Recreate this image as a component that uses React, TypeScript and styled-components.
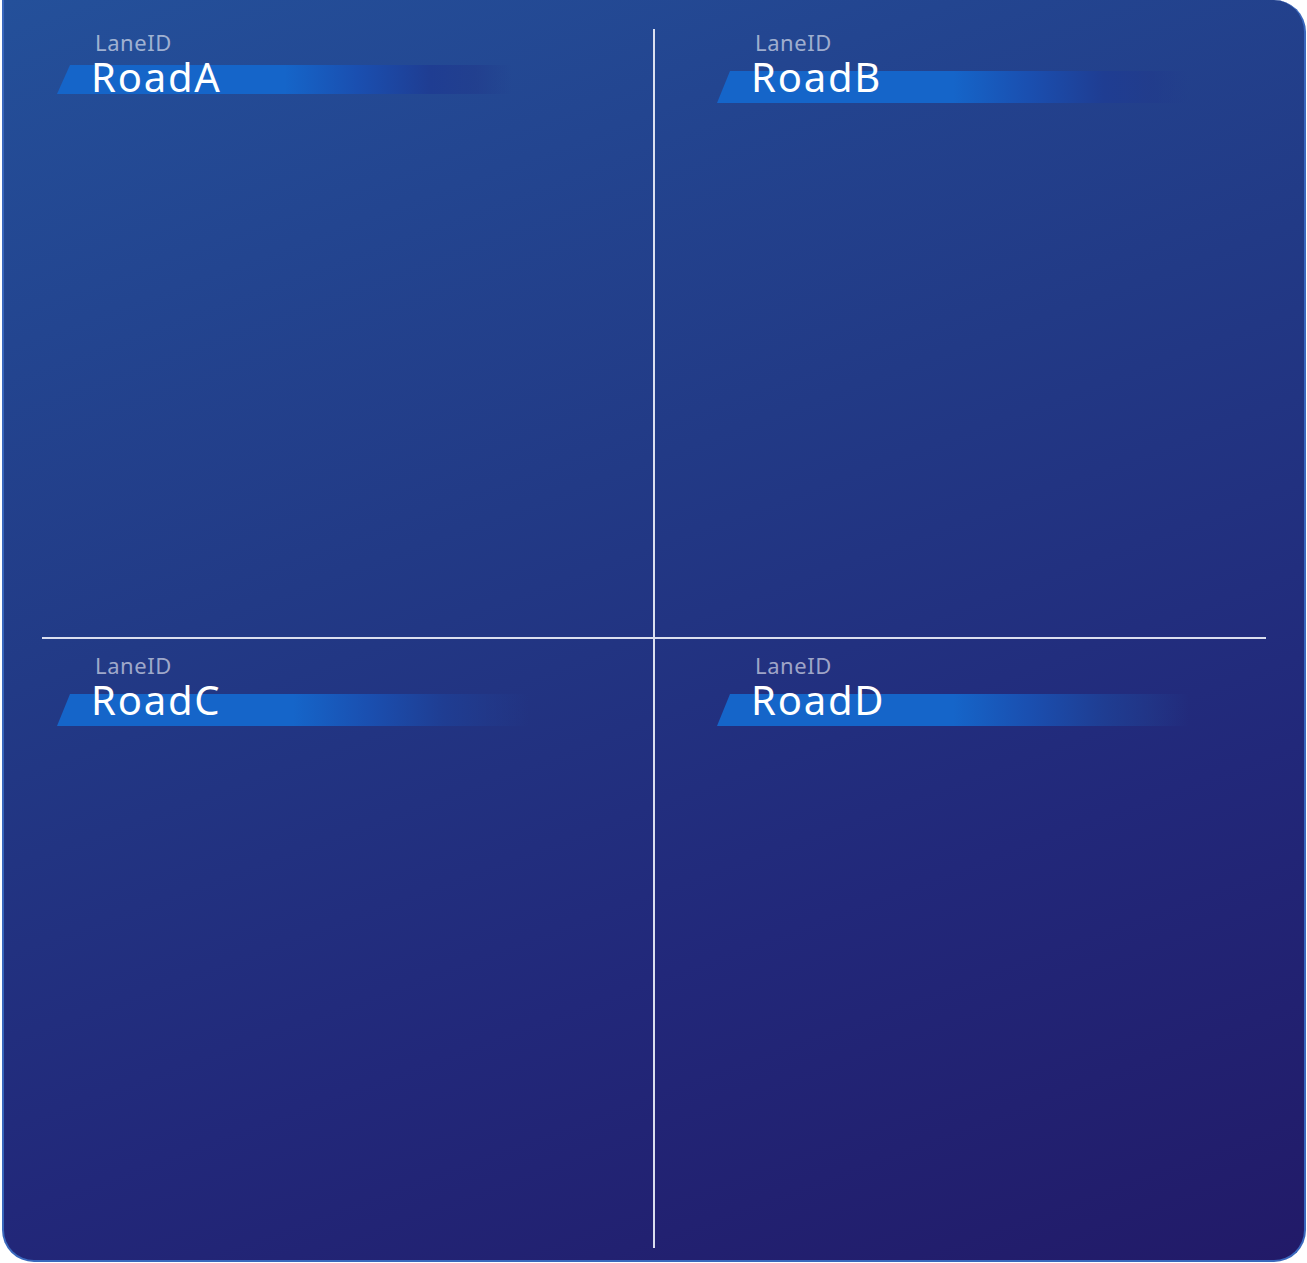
import React from "react";
import styled, { createGlobalStyle } from "styled-components";

const GlobalStyle = createGlobalStyle`
  html, body { margin: 0; padding: 0; background: #ffffff; }
  body { font-family: "Noto Sans", "Open Sans", sans-serif; }
`;

const Panel = styled.div`
  box-sizing: border-box;
  margin-left: 2px;
  width: 1304px;
  height: 1262px;
  padding: 29px 38px 12px 38px;
  border: 2px solid #3a68bd;
  border-top: none;
  border-radius: 0 32px 32px 32px;
  background: linear-gradient(160deg, #24509a 0%, #223a86 40%, #22287a 70%, #221a68 100%);
`;

const Grid = styled.div`
  display: grid;
  grid-template-columns: 613px 1fr;
  grid-template-rows: 610px 1fr;
  height: 100%;
`;

const Cell = styled.div<{ $left: boolean; $top: boolean }>`
  box-sizing: border-box;
  padding-top: ${(p) => (p.$top ? "0px" : "13px")};
  padding-left: ${(p) => (p.$left ? "15px" : "62px")};
  border-right: ${(p) => (p.$left ? "2px solid rgba(235, 238, 248, 0.92)" : "none")};
  border-bottom: ${(p) => (p.$top ? "2px solid rgba(235, 238, 248, 0.92)" : "none")};
`;

const Caption = styled.div`
  padding-left: 38px;
  font-family: "Noto Sans", sans-serif;
  font-size: 22px;
  line-height: 26px;
  letter-spacing: 0.6px;
  color: rgba(255, 255, 255, 0.58);
`;

const Title = styled.div<{ $bandTop: number; $bandHeight: number; $bandWidth: number }>`
  position: relative;
  padding-left: 34px;
  font-family: "Noto Sans", sans-serif;
  font-size: 40px;
  line-height: 44px;
  letter-spacing: 1.8px;
  color: #ffffff;
  z-index: 0;

  &::before {
    content: "";
    position: absolute;
    left: 0;
    top: ${(p) => p.$bandTop}px;
    height: ${(p) => p.$bandHeight}px;
    width: ${(p) => p.$bandWidth}px;
    z-index: -1;
    clip-path: polygon(13px 0, 100% 0, 100% 100%, 0 100%);
    background: linear-gradient(
      90deg,
      #1565c9 0%,
      #1565c9 50%,
      #1a4fb0 66%,
      #1f3d92 82%,
      rgba(33, 58, 140, 0.6) 92%,
      rgba(33, 58, 140, 0) 100%
    );
  }
`;

type Lane = {
  name: string;
  left: boolean;
  top: boolean;
  bandTop: number;
  bandHeight: number;
  bandWidth: number;
};

const lanes: Lane[] = [
  { name: "RoadA", left: true, top: true, bandTop: 10, bandHeight: 29, bandWidth: 455 },
  { name: "RoadB", left: false, top: true, bandTop: 16, bandHeight: 32, bandWidth: 472 },
  { name: "RoadC", left: true, top: false, bandTop: 16, bandHeight: 32, bandWidth: 472 },
  { name: "RoadD", left: false, top: false, bandTop: 16, bandHeight: 32, bandWidth: 472 },
];

export default function App() {
  return (
    <>
      <GlobalStyle />
      <Panel>
        <Grid>
          {lanes.map((l) => (
            <Cell key={l.name} $left={l.left} $top={l.top}>
              <Caption>LaneID</Caption>
              <Title $bandTop={l.bandTop} $bandHeight={l.bandHeight} $bandWidth={l.bandWidth}>
                {l.name}
              </Title>
            </Cell>
          ))}
        </Grid>
      </Panel>
    </>
  );
}
